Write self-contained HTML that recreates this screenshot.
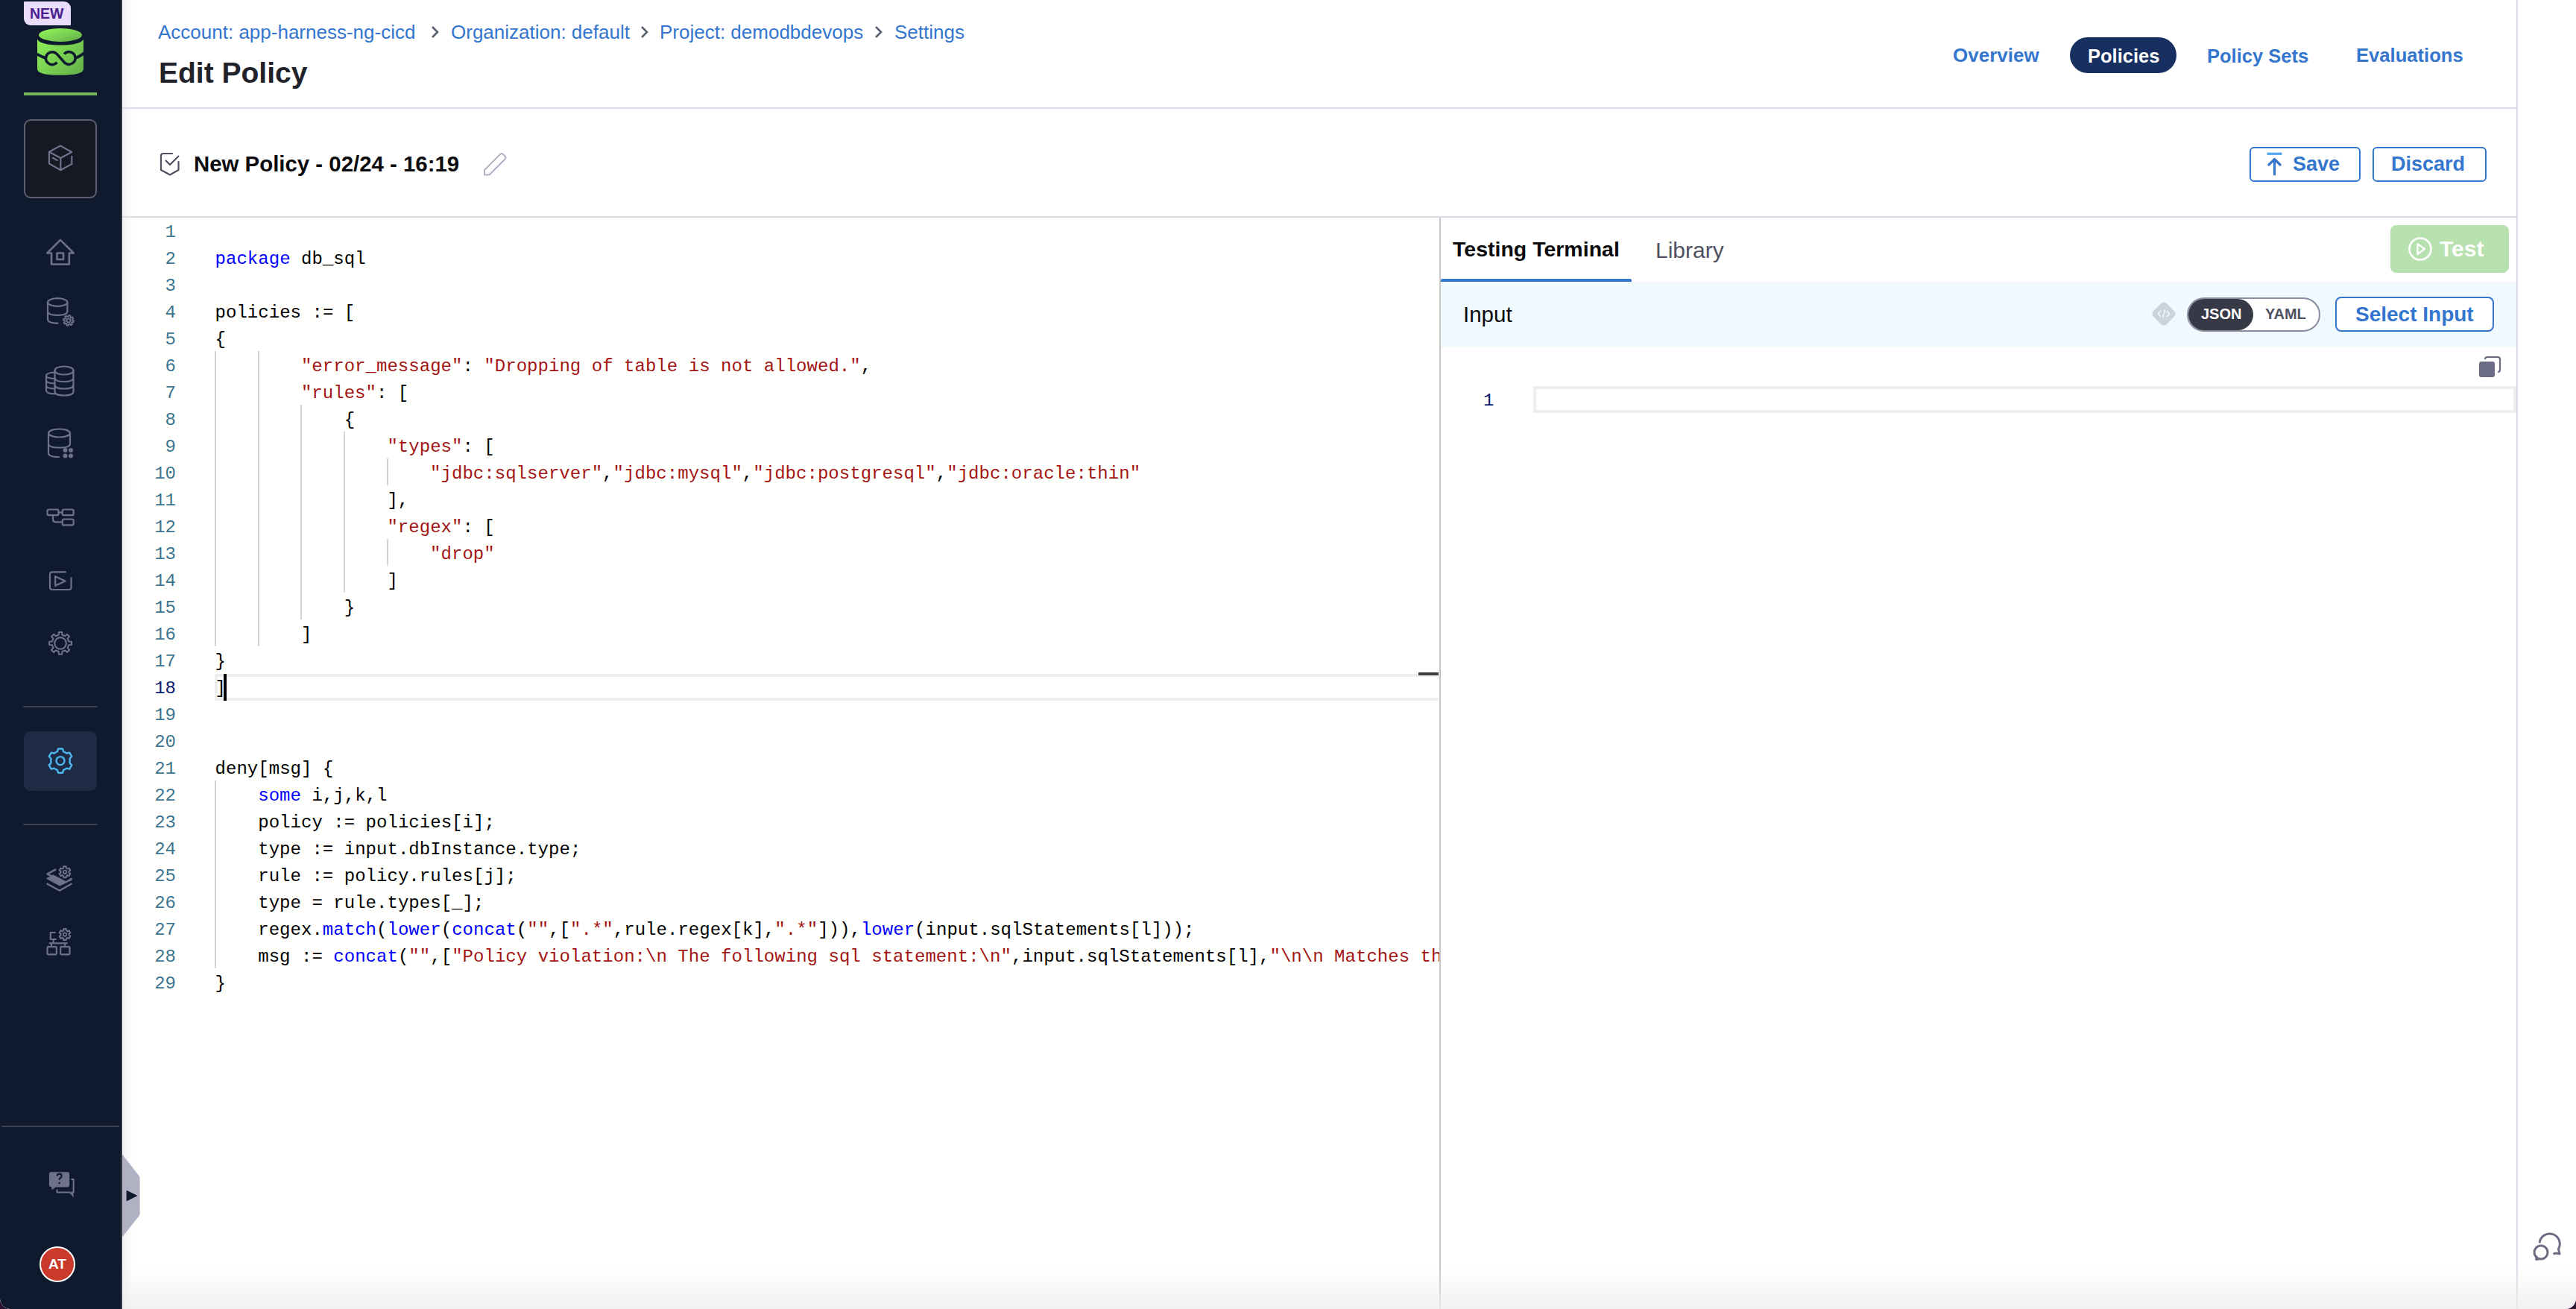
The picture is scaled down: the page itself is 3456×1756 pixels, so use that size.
<!DOCTYPE html>
<html><head><meta charset="utf-8"><title>Edit Policy</title>
<style>
*{box-sizing:border-box}
html,body{margin:0;padding:0}
body{width:3456px;height:1756px;position:relative;overflow:hidden;background:#2a1430;font-family:"Liberation Sans",sans-serif}
.abs{position:absolute}
#page{position:absolute;left:0;top:0;width:3456px;height:1756px;background:#fff;border-radius:0 0 14px 14px;overflow:hidden}
#nav{position:absolute;left:0;top:0;width:164px;height:1756px;background:#0f1a2e;border-right:2px solid #35363f;border-bottom-left-radius:14px}
#main{position:absolute;left:164px;top:0;width:3213px;height:1756px;background:#fff}
.hline{position:absolute;height:2px;background:#d9dae5}
.bc{position:absolute;top:28px;font-size:26px;color:#3476ce;white-space:nowrap;line-height:30px}
.chev{position:absolute;top:32px;width:22px;height:22px}
.navi{position:absolute;top:59px;font-size:26px;font-weight:bold;color:#3476ce;white-space:nowrap;line-height:30px}
.btn{position:absolute;border:2px solid #3476ce;border-radius:6px;background:#fff;color:#3476ce;font-weight:bold;white-space:nowrap}
/* editor */
#ed{position:absolute;left:164px;top:292px;width:1767px;height:1464px;background:#fffffe;overflow:hidden}
.ln{position:absolute;left:156px;width:80px;text-align:right;font-family:"Liberation Mono",monospace;font-size:24px;line-height:36px;height:36px;color:#3d7690;padding-top:3px}
.ln.act{color:#0b216f}
.cl{position:absolute;font-family:"Liberation Mono",monospace;font-size:24px;letter-spacing:0.036px;line-height:36px;height:36px;white-space:pre;color:#000;padding-top:3px}
.guide{position:absolute;width:2px;height:36px;background:#d3d3d3}
.k{color:#0000ff}.s{color:#a31515}.p{color:#000}
</style></head>
<body>
<div id="page">
<!-- main area -->
<div id="main"></div>

<!-- header -->
<div class="hline" style="left:164px;top:144px;width:3213px"></div>
<div class="hline" style="left:164px;top:290px;width:3213px"></div>

<div class="bc" style="left:212px">Account: app-harness-ng-cicd</div>
<svg class="chev" style="left:572px" viewBox="0 0 22 22"><path d="M8 4 L15 11 L8 18" stroke="#56606f" stroke-width="2.6" fill="none"/></svg>
<div class="bc" style="left:605px">Organization: default</div>
<svg class="chev" style="left:853px" viewBox="0 0 22 22"><path d="M8 4 L15 11 L8 18" stroke="#56606f" stroke-width="2.6" fill="none"/></svg>
<div class="bc" style="left:885px">Project: demodbdevops</div>
<svg class="chev" style="left:1167px" viewBox="0 0 22 22"><path d="M8 4 L15 11 L8 18" stroke="#56606f" stroke-width="2.6" fill="none"/></svg>
<div class="bc" style="left:1200px">Settings</div>

<div class="abs" style="left:213px;top:74.5px;font-size:39px;font-weight:bold;color:#22222a;white-space:nowrap;line-height:46px">Edit Policy</div>

<div class="navi" style="left:2620px">Overview</div>
<div class="abs" style="left:2777px;top:50px;width:143px;height:48px;border-radius:24px;background:#183061"></div>
<div class="navi" style="left:2801px;color:#fff;font-size:25.5px;top:59.5px">Policies</div>
<div class="navi" style="left:2961px;font-size:25.5px;top:59.5px">Policy Sets</div>
<div class="navi" style="left:3161px;font-size:25.6px;top:59.4px">Evaluations</div>

<!-- title bar -->
<svg class="abs" style="left:210px;top:200px" width="36" height="40" viewBox="0 0 36 40">
 <path d="M21 6 H9 Q6 6 6 9 V28 L18 34.5 L29.5 28 V17" stroke="#4f5162" stroke-width="2.2" fill="none" stroke-linecap="round" stroke-linejoin="round"/>
 <path d="M12 15 L18 21 L30 9" stroke="#4f5162" stroke-width="2.2" fill="none"/>
</svg>
<div class="abs" style="left:260px;top:202.5px;font-size:29.4px;font-weight:bold;color:#0b0b0d;white-space:nowrap;line-height:34px">New Policy - 02/24 - 16:19</div>
<svg class="abs" style="left:645px;top:200px" width="40" height="40" viewBox="0 0 40 40">
 <path d="M5 33.5 V28 L26 7 Q28 5 30 7 L32.5 9.5 Q34.5 11.5 32.5 13.5 L11.5 34.5 H5 Z" stroke="#b0b2c6" stroke-width="2" fill="none" stroke-linejoin="round"/>
</svg>

<div class="btn" style="left:3018px;top:196.5px;width:149px;height:47px"></div>
<svg class="abs" style="left:3039px;top:203px" width="26" height="34" viewBox="0 0 26 34">
 <path d="M2.5 3.3 H22.5" stroke="#52a7f0" stroke-width="3.2"/>
 <path d="M12.5 31 V11 M5 18 L12.5 10.5 L20 18" stroke="#3476ce" stroke-width="3.2" fill="none" stroke-linecap="round" stroke-linejoin="round"/>
</svg>
<div class="abs" style="left:3076px;top:205px;font-size:27px;font-weight:bold;color:#3476ce;line-height:30px">Save</div>
<div class="btn" style="left:3183px;top:196.5px;width:153px;height:47px"></div>
<div class="abs" style="left:3208px;top:205px;font-size:27px;font-weight:bold;color:#3476ce;line-height:30px">Discard</div>

<!-- editor -->
<div id="ed">
<div style="position:absolute;left:0;top:0;width:1767px;height:1464px;transform:translate(-164px,-292px)">
<div class="abs" style="left:288px;top:904px;width:1642px;height:36px;border:4px solid #eeeeee;border-right:none"></div>
<div class="abs" style="left:300px;top:904px;width:4px;height:36px;background:#000"></div>
<div class="abs" style="left:1903px;top:902px;width:27px;height:4px;background:#404040"></div>
<div class="ln" style="top:290.8px">1</div>
<div class="ln" style="top:326.8px">2</div>
<div class="cl" style="top:326.8px;left:288.5px"><span class="k">package</span><span class="p"> db_sql</span></div>
<div class="ln" style="top:362.8px">3</div>
<div class="ln" style="top:398.8px">4</div>
<div class="cl" style="top:398.8px;left:288.5px"><span class="p">policies := [</span></div>
<div class="ln" style="top:434.8px">5</div>
<div class="cl" style="top:434.8px;left:288.5px"><span class="p">{</span></div>
<div class="ln" style="top:470.8px">6</div>
<div class="guide" style="top:470.8px;left:288.0px"></div>
<div class="guide" style="top:470.8px;left:345.7px"></div>
<div class="cl" style="top:470.8px;left:403.9px"><span class="s">"error_message"</span><span class="p">: </span><span class="s">"Dropping of table is not allowed."</span><span class="p">,</span></div>
<div class="ln" style="top:506.8px">7</div>
<div class="guide" style="top:506.8px;left:288.0px"></div>
<div class="guide" style="top:506.8px;left:345.7px"></div>
<div class="cl" style="top:506.8px;left:403.9px"><span class="s">"rules"</span><span class="p">: [</span></div>
<div class="ln" style="top:542.8px">8</div>
<div class="guide" style="top:542.8px;left:288.0px"></div>
<div class="guide" style="top:542.8px;left:345.7px"></div>
<div class="guide" style="top:542.8px;left:403.4px"></div>
<div class="cl" style="top:542.8px;left:461.7px"><span class="p">{</span></div>
<div class="ln" style="top:578.8px">9</div>
<div class="guide" style="top:578.8px;left:288.0px"></div>
<div class="guide" style="top:578.8px;left:345.7px"></div>
<div class="guide" style="top:578.8px;left:403.4px"></div>
<div class="guide" style="top:578.8px;left:461.2px"></div>
<div class="cl" style="top:578.8px;left:519.4px"><span class="s">"types"</span><span class="p">: [</span></div>
<div class="ln" style="top:614.8px">10</div>
<div class="guide" style="top:614.8px;left:288.0px"></div>
<div class="guide" style="top:614.8px;left:345.7px"></div>
<div class="guide" style="top:614.8px;left:403.4px"></div>
<div class="guide" style="top:614.8px;left:461.2px"></div>
<div class="guide" style="top:614.8px;left:518.9px"></div>
<div class="cl" style="top:614.8px;left:577.1px"><span class="s">"jdbc:sqlserver"</span><span class="p">,</span><span class="s">"jdbc:mysql"</span><span class="p">,</span><span class="s">"jdbc:postgresql"</span><span class="p">,</span><span class="s">"jdbc:oracle:thin"</span></div>
<div class="ln" style="top:650.8px">11</div>
<div class="guide" style="top:650.8px;left:288.0px"></div>
<div class="guide" style="top:650.8px;left:345.7px"></div>
<div class="guide" style="top:650.8px;left:403.4px"></div>
<div class="guide" style="top:650.8px;left:461.2px"></div>
<div class="cl" style="top:650.8px;left:519.4px"><span class="p">],</span></div>
<div class="ln" style="top:686.8px">12</div>
<div class="guide" style="top:686.8px;left:288.0px"></div>
<div class="guide" style="top:686.8px;left:345.7px"></div>
<div class="guide" style="top:686.8px;left:403.4px"></div>
<div class="guide" style="top:686.8px;left:461.2px"></div>
<div class="cl" style="top:686.8px;left:519.4px"><span class="s">"regex"</span><span class="p">: [</span></div>
<div class="ln" style="top:722.8px">13</div>
<div class="guide" style="top:722.8px;left:288.0px"></div>
<div class="guide" style="top:722.8px;left:345.7px"></div>
<div class="guide" style="top:722.8px;left:403.4px"></div>
<div class="guide" style="top:722.8px;left:461.2px"></div>
<div class="guide" style="top:722.8px;left:518.9px"></div>
<div class="cl" style="top:722.8px;left:577.1px"><span class="s">"drop"</span></div>
<div class="ln" style="top:758.8px">14</div>
<div class="guide" style="top:758.8px;left:288.0px"></div>
<div class="guide" style="top:758.8px;left:345.7px"></div>
<div class="guide" style="top:758.8px;left:403.4px"></div>
<div class="guide" style="top:758.8px;left:461.2px"></div>
<div class="cl" style="top:758.8px;left:519.4px"><span class="p">]</span></div>
<div class="ln" style="top:794.8px">15</div>
<div class="guide" style="top:794.8px;left:288.0px"></div>
<div class="guide" style="top:794.8px;left:345.7px"></div>
<div class="guide" style="top:794.8px;left:403.4px"></div>
<div class="cl" style="top:794.8px;left:461.7px"><span class="p">}</span></div>
<div class="ln" style="top:830.8px">16</div>
<div class="guide" style="top:830.8px;left:288.0px"></div>
<div class="guide" style="top:830.8px;left:345.7px"></div>
<div class="cl" style="top:830.8px;left:403.9px"><span class="p">]</span></div>
<div class="ln" style="top:866.8px">17</div>
<div class="cl" style="top:866.8px;left:288.5px"><span class="p">}</span></div>
<div class="ln act" style="top:902.8px">18</div>
<div class="cl" style="top:902.8px;left:288.5px"><span class="p">]</span></div>
<div class="ln" style="top:938.8px">19</div>
<div class="ln" style="top:974.8px">20</div>
<div class="ln" style="top:1010.8px">21</div>
<div class="cl" style="top:1010.8px;left:288.5px"><span class="p">deny[msg] {</span></div>
<div class="ln" style="top:1046.8px">22</div>
<div class="guide" style="top:1046.8px;left:288.0px"></div>
<div class="cl" style="top:1046.8px;left:346.2px"><span class="k">some</span><span class="p"> i,j,k,l</span></div>
<div class="ln" style="top:1082.8px">23</div>
<div class="guide" style="top:1082.8px;left:288.0px"></div>
<div class="cl" style="top:1082.8px;left:346.2px"><span class="p">policy := policies[i];</span></div>
<div class="ln" style="top:1118.8px">24</div>
<div class="guide" style="top:1118.8px;left:288.0px"></div>
<div class="cl" style="top:1118.8px;left:346.2px"><span class="p">type := input.dbInstance.type;</span></div>
<div class="ln" style="top:1154.8px">25</div>
<div class="guide" style="top:1154.8px;left:288.0px"></div>
<div class="cl" style="top:1154.8px;left:346.2px"><span class="p">rule := policy.rules[j];</span></div>
<div class="ln" style="top:1190.8px">26</div>
<div class="guide" style="top:1190.8px;left:288.0px"></div>
<div class="cl" style="top:1190.8px;left:346.2px"><span class="p">type = rule.types[_];</span></div>
<div class="ln" style="top:1226.8px">27</div>
<div class="guide" style="top:1226.8px;left:288.0px"></div>
<div class="cl" style="top:1226.8px;left:346.2px"><span class="p">regex.</span><span class="k">match</span><span class="p">(</span><span class="k">lower</span><span class="p">(</span><span class="k">concat</span><span class="p">(</span><span class="s">""</span><span class="p">,[</span><span class="s">".*"</span><span class="p">,rule.regex[k],</span><span class="s">".*"</span><span class="p">])),</span><span class="k">lower</span><span class="p">(input.sqlStatements[l]));</span></div>
<div class="ln" style="top:1262.8px">28</div>
<div class="guide" style="top:1262.8px;left:288.0px"></div>
<div class="cl" style="top:1262.8px;left:346.2px"><span class="p">msg := </span><span class="k">concat</span><span class="p">(</span><span class="s">""</span><span class="p">,[</span><span class="s">"Policy violation:\n The following sql statement:\n"</span><span class="p">,input.sqlStatements[l],</span><span class="s">"\n\n Matches the sql policy"</span></div>
<div class="ln" style="top:1298.8px">29</div>
<div class="cl" style="top:1298.8px;left:288.5px"><span class="p">}</span></div>
</div>
</div>
<div class="abs" style="left:1931px;top:292px;width:2px;height:1464px;background:#c8c8c8"></div>

<!-- right panel -->
<div class="abs" style="left:1949px;top:318px;font-size:28.5px;font-weight:bold;color:#0b0b0d;white-space:nowrap;line-height:32px">Testing Terminal</div>
<div class="abs" style="left:2221px;top:320px;font-size:30px;color:#4f5162;white-space:nowrap;line-height:32px">Library</div>
<div class="abs" style="left:1933px;top:374px;width:256px;height:4px;background:#3476ce;border-radius:2px 2px 0 0"></div>
<div class="abs" style="left:3207px;top:302px;width:159px;height:64px;border-radius:8px;background:#b7e1ae"></div>
<svg class="abs" style="left:3228px;top:315px" width="38" height="38" viewBox="0 0 38 38">
 <circle cx="19" cy="19" r="14.5" stroke="#fff" stroke-width="2.6" fill="none"/>
 <path d="M15.5 12.2 L25 19 L15.5 25.8 Z" stroke="#fff" stroke-width="2.4" fill="none" stroke-linejoin="round"/>
</svg>
<div class="abs" style="left:3273px;top:317.5px;font-size:30px;font-weight:bold;color:#fff;line-height:32px">Test</div>

<div class="abs" style="left:1933px;top:378px;width:1443px;height:88px;background:#f0f9fd"></div>
<div class="abs" style="left:1963px;top:406px;font-size:29.5px;color:#0b0b0d;line-height:32px">Input</div>
<svg class="abs" style="left:2886px;top:404px" width="34" height="34" viewBox="0 0 34 34">
 <rect x="4.5" y="4.5" width="25" height="25" rx="5" transform="rotate(45 17 17)" fill="#cdd3dd"/>
 <path d="M13 13 L9.5 17 L13 21 M21 13 L24.5 17 L21 21 M18.5 11.5 L15.5 22.5" stroke="#f0f9fd" stroke-width="1.6" fill="none"/>
</svg>
<div class="abs" style="left:2934px;top:399px;width:179px;height:46px;border-radius:23px;border:2px solid #8a8ca0;background:#fff"></div>
<div class="abs" style="left:2936px;top:401px;width:87px;height:42px;border-radius:21px;background:#383946"></div>
<div class="abs" style="left:2953px;top:409px;font-size:20px;font-weight:bold;color:#fff;line-height:24px">JSON</div>
<div class="abs" style="left:3039px;top:409px;font-size:20px;font-weight:bold;color:#4f5162;line-height:24px">YAML</div>
<div class="btn" style="left:3133px;top:398px;width:213px;height:47px;border-radius:8px"></div>
<div class="abs" style="left:3160px;top:407px;font-size:28px;font-weight:bold;color:#3476ce;line-height:30px">Select Input</div>
<svg class="abs" style="left:3322px;top:474px" width="36" height="36" viewBox="0 0 36 36">
 <path d="M12 8 Q12 5 15 5 H29 Q32 5 32 8 V22 Q32 25 29 25" stroke="#6b6d85" stroke-width="2.2" fill="none"/>
 <rect x="4" y="11" width="21" height="21" rx="3" fill="#6b6d85"/>
</svg>
<div class="abs" style="left:1933px;top:518px;width:1442px;height:1238px;background:#fffffe"></div>
<div class="abs" style="left:1941.5px;top:519.5px;width:63px;text-align:right;font-family:'Liberation Mono',monospace;font-size:24px;line-height:36px;color:#0b216f">1</div>
<div class="abs" style="left:2057px;top:518px;width:1319px;height:36px;border:4px solid #eeeeee"></div>
<div class="abs" style="left:3376px;top:0;width:2px;height:1756px;background:#d9dae5"></div>

<div class="abs" style="left:165px;top:0;width:14px;height:1756px;background:linear-gradient(to right,rgba(225,228,230,.5),rgba(255,255,255,0))"></div>
<!-- bottom gradient -->
<div class="abs" style="left:164px;top:1700px;width:3292px;height:56px;background:linear-gradient(to bottom,rgba(238,238,238,0),rgba(238,238,238,.8))"></div>

<!-- right strip chat icon -->
<svg class="abs" style="left:3394px;top:1650px" width="48" height="48" viewBox="0 0 48 48">
 <path d="M13.1 17.4 A13.6 13.6 0 1 1 38.4 25.4 L40 32 L35.5 31.3 Q33.5 31.2 31.8 32.4" stroke="#6b6d83" stroke-width="3" fill="none" stroke-linejoin="round"/>
 <circle cx="15" cy="30" r="9" stroke="#6b6d83" stroke-width="3" fill="#fff"/>
 <path d="M8.6 34.5 L8.8 39.6 L13.5 38.6" stroke="#6b6d83" stroke-width="3" fill="none" stroke-linejoin="round"/>
</svg>

<!-- sidebar -->
<div id="nav"></div>
<div class="abs" style="left:32px;top:2px;width:63px;height:32px;background:#e9ddfb;border-radius:1px 9px 1px 9px"></div>
<div class="abs" style="left:40px;top:7px;font-size:19.5px;font-weight:bold;color:#4a1f8f;line-height:22px">NEW</div>
<svg class="abs" style="left:50px;top:38px" width="62" height="64" viewBox="0 0 62 64">
 <defs><linearGradient id="lg" x1="0" y1="0" x2="1" y2="1"><stop offset="0" stop-color="#95f85a"/><stop offset="1" stop-color="#62ae4a"/></linearGradient></defs>
 <path d="M0 11 Q0 1 31 1 Q62 1 62 11 V54.5 Q62 62.8 31 62.8 Q0 62.8 0 54.5 Z" fill="url(#lg)"/>
 <path d="M-1 11 Q-1 22.5 31 22.5 Q63 22.5 63 11 V0 H-1 Z" fill="#0f1a2e"/>
 <ellipse cx="31" cy="9" rx="29" ry="9" fill="url(#lg)"/>
 <path d="M-1 34.3 Q6 38.2 11.8 40.15 M50.8 39.9 Q56 38.5 63 33" stroke="#0f1a2e" stroke-width="3.8" fill="none"/>
 <path d="M26.5 45.6 A8.5 8.5 0 1 1 26.5 34.7 L36.04 45.36 A8.5 8.5 0 1 0 36.04 34.44" stroke="#0f1a2e" stroke-width="3.5" fill="none"/>
</svg>
<div class="abs" style="left:32px;top:124px;width:98px;height:4px;background:#78b45c"></div>
<div class="abs" style="left:32px;top:160px;width:98px;height:106px;border:2px solid #5c5e70;border-radius:9px;background:#161823"></div>
<svg class="abs" style="left:0;top:0" width="164" height="1756" viewBox="0 0 164 1756" fill="none" stroke="#6e7189" stroke-width="2.2" stroke-linejoin="round" stroke-linecap="round">
 <!-- cube -->
 <path d="M81 195.5 L96.3 204 L81.3 212 L66 203.7 Z M66 203.7 V219.5 L81.3 228.3 L96.3 220 V209.8 M81.3 212 V228.3 M70.8 211.8 L76.8 215"/>
 <!-- home -->
 <path d="M81 321.8 L63.3 339.5 H69 V354.5 H92.8 V339.5 H98.7 Z" stroke-width="2.6"/>
 <rect x="76.5" y="339.5" width="8.5" height="8.5" stroke-width="2.6"/>
 <!-- db gear -->
 <ellipse cx="77.2" cy="405.5" rx="13.2" ry="5.3"/>
 <path d="M64 405.5 V428 Q64 433.7 77.5 433.7 M64 417.5 Q64 422.8 77.2 422.8 Q90.4 422.8 90.4 417.5 V405.5"/>
 <path d="M97.10 429.72 L99.00 430.15 L98.54 432.40 L96.62 432.05 L95.73 433.38 L96.77 435.02 L94.86 436.29 L93.75 434.69 L92.18 435.00 L91.75 436.90 L89.50 436.44 L89.85 434.52 L88.52 433.63 L86.88 434.67 L85.61 432.76 L87.21 431.65 L86.90 430.08 L85.00 429.65 L85.46 427.40 L87.38 427.75 L88.27 426.42 L87.23 424.78 L89.14 423.51 L90.25 425.11 L91.82 424.80 L92.25 422.90 L94.50 423.36 L94.15 425.28 L95.48 426.17 L97.12 425.13 L98.39 427.04 L96.79 428.15 Z" stroke-width="1.8" fill="#0f1a2e"/>
 <circle cx="92" cy="429.9" r="2.5" stroke-width="1.8"/>
 <!-- db stack -->
 <ellipse cx="86" cy="497" rx="12.5" ry="5.5"/>
 <path d="M73.5 497 V525 Q73.5 530.5 86 530.5 Q98.5 530.5 98.5 525 V497 M73.5 506.5 Q73.5 512 86 512 Q98.5 512 98.5 506.5 M73.5 516 Q73.5 521.5 86 521.5 Q98.5 521.5 98.5 516"/>
 <path d="M73.5 499.5 Q62 500 62 504 V524 Q62 528 73.5 528.5 M62 510.5 Q62 514 73.5 514.5 M62 517.5 Q62 521 73.5 521.5 M62 504 Q62 507.5 73.5 508"/>
 <!-- db grid -->
 <ellipse cx="79.5" cy="581" rx="14.5" ry="5.5"/>
 <path d="M65 581 V608 Q65 613 79 613 M65 595.5 Q65 600.5 79.5 600.5 Q94 600.5 94 595.5 V581"/>
 <g fill="#6e7189" stroke="none"><circle cx="87.5" cy="604" r="3"/><circle cx="95" cy="604" r="3"/><circle cx="87.5" cy="611.5" r="3"/><circle cx="95" cy="611.5" r="3"/></g>
 <!-- org -->
 <rect x="63.5" y="683.5" width="15" height="7.7" rx="2"/>
 <rect x="83.7" y="683.5" width="15" height="7.7" rx="2"/>
 <rect x="83.7" y="696.5" width="15" height="7.9" rx="2"/>
 <path d="M78.5 687.3 H83.7 M71 691.2 V696.5 Q71 700.4 75 700.4 H83.7"/>
 <!-- play -->
 <path d="M88 767.3 H70 Q67 767.3 67 770.3 V788 Q67 791 70 791 H92.5 Q95.5 791 95.5 788 V775.3"/>
 <path d="M74.2 773.2 V785.8 L87.6 779.4 Z"/>
 <!-- gear outline -->
 <path d="M78.65 851.76 L78.94 848.05 L83.16 848.05 L83.45 851.76 L87.23 853.32 L90.06 850.90 L93.05 853.89 L90.63 856.72 L92.19 860.50 L95.90 860.79 L95.90 865.01 L92.19 865.30 L90.63 869.08 L93.05 871.91 L90.06 874.90 L87.23 872.48 L83.45 874.04 L83.16 877.75 L78.94 877.75 L78.65 874.04 L74.87 872.48 L72.04 874.90 L69.05 871.91 L71.47 869.08 L69.91 865.30 L66.20 865.01 L66.20 860.79 L69.91 860.50 L71.47 856.72 L69.05 853.89 L72.04 850.90 L74.87 853.32 Z" stroke-width="2.1"/>
 <circle cx="81.05" cy="862.9" r="7.8" stroke-width="2.1"/>
 <!-- separators -->
 <path d="M32 948 H130 M32 1106 H130 M3 1511 H159" stroke="#3b4052" stroke-width="2"/>
</svg>
<div class="abs" style="left:32px;top:981px;width:98px;height:80px;border-radius:9px;background:#1f2b45"></div>
<svg class="abs" style="left:0;top:0" width="164" height="1756" viewBox="0 0 164 1756" fill="none" stroke="#6e7189" stroke-width="2.2" stroke-linejoin="round" stroke-linecap="round">
 <!-- active gear -->
 <path d="M78 1004.5 H84 L85.2 1008.3 Q87.5 1009 89.3 1010.5 L93.2 1009.6 L96.2 1014.8 L93.5 1017.7 Q94 1020.6 93.5 1023.5 L96.2 1026.4 L93.2 1031.6 L89.3 1030.7 Q87.5 1032.2 85.2 1032.9 L84 1036.7 H78 L76.8 1032.9 Q74.5 1032.2 72.7 1030.7 L68.8 1031.6 L65.8 1026.4 L68.5 1023.5 Q68 1020.6 68.5 1017.7 L65.8 1014.8 L68.8 1009.6 L72.7 1010.5 Q74.5 1009 76.8 1008.3 Z" stroke="#4cb6ef" stroke-width="2.4"/>
 <circle cx="81" cy="1020.6" r="5.5" stroke="#4cb6ef" stroke-width="2.4"/>
  <!-- layers gear -->
 <path d="M74.2 1166.6 L63.5 1172.4 L80 1181" stroke-width="2.4"/>
 <path d="M63.5 1178.3 L71 1174.3 L80 1179 L88.5 1183.3 L95.6 1178.6 L95.6 1180.2 L80 1187.5 Z" fill="#6e7189" stroke-width="2"/>
 <path d="M63.5 1185.8 L80 1194.8 L95.6 1185.8" stroke-width="2.4"/>
 <path d="M85.24 1164.50 L85.25 1162.31 L88.85 1162.31 L88.86 1164.50 L90.73 1165.58 L92.64 1164.50 L94.43 1167.61 L92.55 1168.72 L92.55 1170.88 L94.43 1171.99 L92.64 1175.10 L90.73 1174.02 L88.86 1175.10 L88.85 1177.29 L85.25 1177.29 L85.24 1175.10 L83.37 1174.02 L81.46 1175.10 L79.67 1171.99 L81.55 1170.88 L81.55 1168.72 L79.67 1167.61 L81.46 1164.50 L83.37 1165.58 Z" stroke-width="2" fill="#0f1a2e"/>
 <circle cx="87.05" cy="1169.8" r="2.2" stroke-width="1.8"/>
 <!-- network gear -->
 <rect x="63.5" y="1270.2" width="12.3" height="10.1" rx="1"/>
 <rect x="81.2" y="1270.2" width="12.3" height="10.1" rx="1"/>
 <path d="M74.8 1251 H67.8 V1260 H75.8 M71.6 1260 V1265.4 M65.7 1265.4 H90.8 M68.9 1265.4 V1270.2 M87 1265.4 V1270.2" stroke-linecap="butt" stroke-linejoin="miter"/>
 <path d="M85.24 1248.30 L85.25 1246.11 L88.85 1246.11 L88.86 1248.30 L90.73 1249.38 L92.64 1248.30 L94.43 1251.41 L92.55 1252.52 L92.55 1254.68 L94.43 1255.79 L92.64 1258.90 L90.73 1257.82 L88.86 1258.90 L88.85 1261.09 L85.25 1261.09 L85.24 1258.90 L83.37 1257.82 L81.46 1258.90 L79.67 1255.79 L81.55 1254.68 L81.55 1252.52 L79.67 1251.41 L81.46 1248.30 L83.37 1249.38 Z" stroke-width="2" fill="#0f1a2e"/>
 <circle cx="87.05" cy="1253.6" r="2.2" stroke-width="1.8"/>
 <!-- help -->
 <path d="M68.5 1572.2 H90.5 Q93.2 1572.2 93.2 1575 V1589.6 Q93.2 1592.4 90.5 1592.4 H75 L69.3 1596.6 V1592.4 Q65.9 1592 65.9 1589.6 V1575 Q65.9 1572.2 68.5 1572.2 Z" fill="#6e7189" stroke="none"/>
 <path d="M95.5 1582 H98.6 V1599.5 L97 1599.5 L97.5 1603.2 L94 1599.5 H76.5 V1595.5" stroke-width="2.1" stroke-linecap="butt" stroke-linejoin="miter"/>
 <path d="M76.6 1577.6 Q76.8 1574.6 79.7 1574.6 Q82.6 1574.6 82.6 1577.4 Q82.6 1579.2 80.8 1580.2 Q79.6 1581 79.6 1583" stroke="#0f1a2e" stroke-width="2.2" stroke-linecap="butt"/>
 <circle cx="79.6" cy="1587" r="1.3" fill="#0f1a2e" stroke="none"/>
</svg>
<!-- avatar -->
<div class="abs" style="left:53px;top:1672px;width:48px;height:48px;border-radius:50%;background:#c93a2a;border:2.3px solid #fff"></div>
<div class="abs" style="left:53px;top:1684px;width:48px;text-align:center;font-size:19px;font-weight:bold;color:#fff;line-height:24px">AT</div>
<!-- collapse tab -->
<svg class="abs" style="left:163px;top:1546px" width="28" height="118" viewBox="0 0 28 118">
 <path d="M1 2.5 L23.3 31 Q24.6 32.6 24.6 35 V81.5 Q24.6 84 23.3 85.5 L1 113.5 Z" fill="#b0b1c2"/>
 <path d="M7.1 51.4 L20.6 58.1 L7.1 64.8 Z" fill="#0f1a2e" stroke="#0f1a2e" stroke-width="1" stroke-linejoin="round"/>
</svg>
</div>
</body></html>
